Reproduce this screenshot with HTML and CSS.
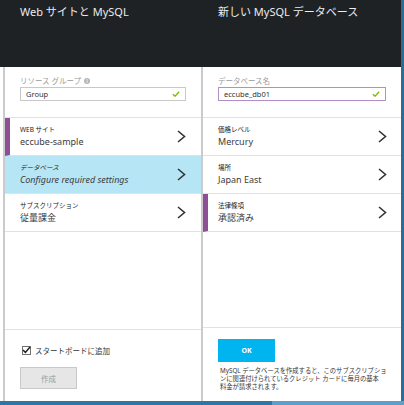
FILE: index.html
```html
<!DOCTYPE html>
<html>
  <head>
    <meta charset="utf-8" />
    <title>Web サイトと MySQL</title>
    <link rel="stylesheet" href="styles.css">
  </head>
  <body>
    <div class="screen">
      <div class="blades">
        <!-- Web site + MySQL blade -->
        <div class="blade blade-left">
          <div class="blade-head">Web サイトと MySQL</div>
          <div class="blade-body">
            <div class="field">
              <div class="field-label">リソース グループ
                <svg class="info" width="6" height="6" viewBox="0 0 6 6"><circle cx="3" cy="3" r="3" fill="#b5b5b5"/><rect x="2.6" y="2.4" width="0.9" height="2.2" fill="#fff"/><rect x="2.6" y="1.2" width="0.9" height="0.8" fill="#fff"/></svg>
              </div>
              <div class="field-input">
                <span>Group</span>
                <svg class="ok" width="8" height="6" viewBox="0 0 8 6"><path d="M0.8 3.2 L3 5.2 L7.2 0.8" fill="none" stroke="#7ab800" stroke-width="1.3"/></svg>
              </div>
            </div>
            <div class="rows">
              <div class="row marked">
                <div class="row-text">
                  <div class="row-label">WEB サイト</div>
                  <div class="row-value">eccube-sample</div>
                </div>
                <svg class="chev" width="9" height="13" viewBox="0 0 9 13"><path d="M1 1 L7.5 6.5 L1 12" fill="none" stroke="#333" stroke-width="1.6"/></svg>
              </div>
              <div class="row selected">
                <div class="row-text">
                  <div class="row-label italic">データベース</div>
                  <div class="row-value italic">Configure required settings</div>
                </div>
                <svg class="chev" width="9" height="13" viewBox="0 0 9 13"><path d="M1 1 L7.5 6.5 L1 12" fill="none" stroke="#333" stroke-width="1.6"/></svg>
              </div>
              <div class="row">
                <div class="row-text">
                  <div class="row-label">サブスクリプション</div>
                  <div class="row-value">従量課金</div>
                </div>
                <svg class="chev" width="9" height="13" viewBox="0 0 9 13"><path d="M1 1 L7.5 6.5 L1 12" fill="none" stroke="#333" stroke-width="1.6"/></svg>
              </div>
            </div>
            <div class="spacer"></div>
            <div class="foot foot-left">
              <label class="check">
                <span class="box"><svg width="9" height="8" viewBox="0 0 9 8"><path d="M1 4 L3.4 6.4 L8 1" fill="none" stroke="#222" stroke-width="1.5"/></svg></span>
                スタートボードに追加
              </label>
              <div class="btn btn-off">作成</div>
            </div>
          </div>
        </div>

        <!-- New MySQL database blade -->
        <div class="blade blade-right">
          <div class="blade-head">新しい MySQL データベース</div>
          <div class="blade-body">
            <div class="field">
              <div class="field-label">データベース名</div>
              <div class="field-input active">
                <span>eccube_db01</span>
                <svg class="ok" width="8" height="6" viewBox="0 0 8 6"><path d="M0.8 3.2 L3 5.2 L7.2 0.8" fill="none" stroke="#7ab800" stroke-width="1.3"/></svg>
              </div>
            </div>
            <div class="rows">
              <div class="row">
                <div class="row-text">
                  <div class="row-label">価格レベル</div>
                  <div class="row-value">Mercury</div>
                </div>
                <svg class="chev" width="9" height="13" viewBox="0 0 9 13"><path d="M1 1 L7.5 6.5 L1 12" fill="none" stroke="#333" stroke-width="1.6"/></svg>
              </div>
              <div class="row">
                <div class="row-text">
                  <div class="row-label">場所</div>
                  <div class="row-value">Japan East</div>
                </div>
                <svg class="chev" width="9" height="13" viewBox="0 0 9 13"><path d="M1 1 L7.5 6.5 L1 12" fill="none" stroke="#333" stroke-width="1.6"/></svg>
              </div>
              <div class="row marked">
                <div class="row-text">
                  <div class="row-label">法律條項</div>
                  <div class="row-value">承認済み</div>
                </div>
                <svg class="chev" width="9" height="13" viewBox="0 0 9 13"><path d="M1 1 L7.5 6.5 L1 12" fill="none" stroke="#333" stroke-width="1.6"/></svg>
              </div>
            </div>
            <div class="spacer"></div>
            <div class="foot foot-right">
              <div class="btn btn-ok">OK</div>
              <p class="note">MySQL データベースを作成すると、このサブスクリプショ<br>ンに関連付けられているクレジット カードに毎月の基本<br>料金が請求されます。</p>
            </div>
          </div>
        </div>
        <div class="edge"></div>
      </div>
      <div class="taskbar"><div class="task-a"></div><div class="task-b"></div></div>
    </div>
  </body>
</html>
```

FILE: styles.css
```css
body {
  margin: 0;
  background: #fff;
  font-family: "Noto Sans", "Noto Sans CJK JP", sans-serif;
  color: #333;
}

.screen {
  width: 404px;
  height: 405px;
  display: flex;
  flex-direction: column;
  overflow: hidden;
}

.blades {
  flex: 1;
  display: flex;
}

.blade {
  display: flex;
  flex-direction: column;
}

.blade-left {
  width: 203px;
}

.blade-right {
  width: 198px;
}

.blade-head {
  height: 67px;
  background: #1e2225;
  color: #ececec;
  font-size: 11px;
  line-height: 14px;
  padding: 5px 0 0 20px;
  box-sizing: border-box;
  white-space: nowrap;
}

.blade-right .blade-head {
  padding-left: 15px;
}

.blade-body {
  flex: 1;
  display: flex;
  flex-direction: column;
  background: #fff;
}

.blade-left .blade-body {
  margin-left: 3px;
  border-left: 2px solid #cbcbcb;
  border-right: 2px solid #cbcbcb;
}

.field {
  padding: 8px 15px 16px 15px;
}

.field-label {
  font-size: 7.5px;
  line-height: 12px;
  color: #9a9a9a;
  display: flex;
  align-items: center;
  gap: 3px;
}

.field-input {
  height: 14px;
  border: 1px solid #c8c8c8;
  box-sizing: border-box;
  display: flex;
  align-items: center;
  justify-content: space-between;
  padding: 0 5px 0 5px;
  font-size: 7.5px;
  color: #333;
}

.field-input.active {
  border-color: #b48fc6;
}

.rows {
  border-top: 1px solid #e2e2e2;
}

.row {
  height: 38px;
  box-sizing: border-box;
  border-bottom: 1px solid #e2e2e2;
  display: flex;
  align-items: center;
  justify-content: space-between;
  padding: 0 15px 0 15px;
}

.blade-right .row {
  padding-right: 14px;
}

.row.marked {
  border-left: 5px solid #8e4f96;
  padding-left: 10px;
}

.row.selected {
  background: #b6e6f6;
}

.row-label {
  font-size: 6.5px;
  line-height: 9px;
  color: #222;
}

.row-value {
  font-size: 9px;
  line-height: 14px;
  color: #3c3c3c;
  margin-top: 1px;
}

.italic {
  font-style: italic;
}

.spacer {
  flex: 1;
}

.foot {
  border-top: 1px solid #e2e2e2;
}

.foot-left {
  height: 72px;
  padding: 15px 0 0 15px;
  box-sizing: border-box;
}

.foot-right {
  height: 74px;
  padding: 11px 0 0 15px;
  box-sizing: border-box;
}

.check {
  display: flex;
  align-items: center;
  gap: 4px;
  font-size: 7.5px;
  color: #333;
  margin-left: 2px;
  height: 10px;
}

.box {
  width: 9px;
  height: 9px;
  border: 1px solid #707070;
  box-sizing: border-box;
  display: flex;
  align-items: center;
  justify-content: center;
}

.box svg {
  flex: none;
}

.btn {
  width: 57px;
  height: 22px;
  box-sizing: border-box;
  display: flex;
  align-items: center;
  justify-content: center;
  font-size: 7.5px;
}

.btn-off {
  margin-top: 12px;
  background: #e6e6e6;
  border: 1px solid #c9c9c9;
  color: #9a9a9a;
}

.btn-ok {
  height: 23px;
  background: #00b4ef;
  color: #fff;
  font-weight: bold;
  font-size: 7px;
}

.note {
  margin: 5px 0 0 2px;
  font-size: 6.3px;
  line-height: 8px;
  color: #333;
  white-space: nowrap;
}

.edge {
  width: 3px;
  background: #2c6d98;
}

.taskbar {
  height: 4px;
  display: flex;
}

.task-a {
  width: 272px;
  background: #2b77a7;
}

.task-b {
  flex: 1;
  background: #5e9ecb;
}
```
